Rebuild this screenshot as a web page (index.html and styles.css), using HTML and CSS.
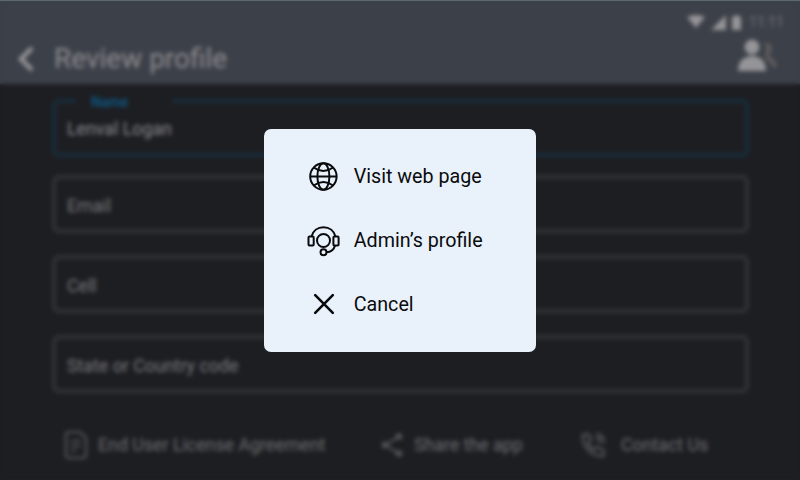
FILE: index.html
```html
<!DOCTYPE html>
<html lang="en">
<head>
<meta charset="utf-8">
<title>Review profile</title>
<link rel="stylesheet" href="styles.css">
</head>
<body>
<div class="screen">
  <header class="appbar">
    <div class="status">
      <svg width="18" height="14" viewBox="0 0 18 14"><path d="M0 2Q9-2 18 2L9 13Z" fill="currentColor"/></svg>
      <svg width="15" height="15" viewBox="0 0 15 15"><path d="M15 0V15H0Z" fill="currentColor"/></svg>
      <svg width="9" height="15" viewBox="0 0 9 15"><path d="M3 0h3v1.500h3V15H0V1.500h3Z" fill="currentColor"/></svg>
      <span class="clock">11:11</span>
    </div>
    <div class="titlebar">
      <svg class="back" width="18" height="26" viewBox="0 0 18 26"><path d="M15 2L4 13L15 24" fill="none" stroke="currentColor" stroke-width="4.500"/></svg>
      <h1>Review profile</h1>
      <svg class="people" width="40" height="34" viewBox="0 0 40 34"><circle cx="14" cy="8" r="7.500" fill="currentColor"/><path d="M0 32C0 22 6 17 14 17S28 22 28 32Z" fill="currentColor"/><path d="M27 6q6 0 4 6q-1 3-4 3M28 19q7 1 9 9" fill="none" stroke="#605c5e" stroke-width="4.500"/></svg>
    </div>
  </header>
  <main>
    <fieldset class="field active"><legend>Name</legend><span>Lenval Logan</span></fieldset>
    <div class="field">Email</div>
    <div class="field">Cell</div>
    <div class="field">State or Country code</div>
  </main>
  <footer>
    <div class="link eula">
      <svg width="24" height="30" viewBox="0 0 24 30" fill="none" stroke="currentColor" stroke-width="2.200"><path d="M5 2h11l6 6v17q0 3-3 3H5q-3 0-3-3V5q0-3 3-3Z"/><path d="M7 11h10M7 16h10M7 21h5"/></svg>
      <span>End User License Agreement</span>
    </div>
    <div class="link share">
      <svg width="24" height="26" viewBox="0 0 24 26" fill="currentColor"><path d="M18 4.500L4 13L18 21.500" fill="none" stroke="currentColor" stroke-width="2.200"/><circle cx="18" cy="4.500" r="3.300"/><circle cx="4" cy="13" r="3.300"/><circle cx="18" cy="21.500" r="3.300"/></svg>
      <span>Share the app</span>
    </div>
    <div class="link contact">
      <svg width="26" height="26" viewBox="0 0 26 26" fill="none" stroke="currentColor" stroke-width="2.400"><path d="M3 3l4-1q2 0 3 3l1 3-3 3q2 5 6 7l3-3 5 2q2 1 2 3l-1 4Q14 24 8 18Q2 11 3 3ZM16 2q8 1 8 9M16 6q4 1 4 5"/></svg>
      <span>Contact Us</span>
    </div>
  </footer>
</div>
<div class="overlay">
  <div class="dialog" role="dialog">
    <button>
      <svg width="34" height="34" viewBox="0 0 34 34" fill="none" stroke="currentColor" stroke-width="2"><circle cx="16.400" cy="17.500" r="13.200"/><ellipse cx="16.400" cy="17.500" rx="6" ry="13.200"/><path d="M3.200 17.500H29.600M6.700 8.500Q16.400 15.500 26.100 8.500M6.700 26.500Q16.400 19.500 26.100 26.500"/></svg>
      <span>Visit web page</span>
    </button>
    <button>
      <svg width="34" height="34" viewBox="0 0 34 34" fill="none" stroke="currentColor" stroke-width="2"><circle cx="16.500" cy="17.500" r="6.500"/><path d="M4.500 13.500C6 8 10.500 4.300 16.500 4.300S27 8 28.500 13.500M28 22.500C27 26.500 24 29 19.500 29.300"/><rect x="1.500" y="13.600" width="5.200" height="8.800" rx="1"/><rect x="26.400" y="13.600" width="5.200" height="8.800" rx="1"/><circle cx="16.500" cy="29.300" r="3"/></svg>
      <span>Admin’s profile</span>
    </button>
    <button>
      <svg width="34" height="34" viewBox="0 0 34 34" fill="none" stroke="currentColor" stroke-width="2.600" stroke-linecap="round"><path d="M8.200 8.200L25.800 25.800M25.800 8.200L8.200 25.800"/></svg>
      <span>Cancel</span>
    </button>
  </div>
</div>
</body>
</html>
```
FILE: styles.css
```css
* { box-sizing: border-box; }
body {
  margin: 0;
  width: 800px;
  height: 480px;
  overflow: hidden;
  font-family: Roboto, "Liberation Sans", sans-serif;
}
svg { flex: none; display: block; }
.screen {
  height: 480px;
  display: flex;
  flex-direction: column;
  background: #1d1e22;
}
.appbar {
  height: 84px;
  background: #3c4048;
  color: #959498;
}
.status {
  height: 36px;
  padding: 15px 16px 0 0;
  display: flex;
  justify-content: flex-end;
  align-items: flex-start;
  gap: 6px;
}
.clock {
  width: 35px;
  margin-left: 2px;
  color: #74777c;
  font-size: 14px;
  line-height: 14px;
}
.titlebar {
  height: 46px;
  display: flex;
  align-items: center;
  padding: 0 22px 0 17px;
}
.titlebar h1 {
  margin: 0 0 0 19px;
  font-size: 28px;
  font-weight: 400;
  line-height: 30px;
  color: #8c8c91;
}
.people {
  margin: -7px 0 0 auto;
}
main {
  height: 309px;
  padding: 14px 51px 0 52px;
  display: flex;
  flex-direction: column;
  gap: 22px;
}
.field {
  height: 58px;
  flex: none;
  margin: 0;
  border: 4px solid #323337;
  border-radius: 7px;
  padding: 2px 11px 0;
  display: flex;
  align-items: center;
  font-size: 17.800px;
  color: #78797d;
}
.field.active {
  display: block;
  height: 65px;
  margin-top: -6px;
  margin-bottom: -4px;
  padding-top: 0;
  border-color: #182d3b;
  color: #88898c;
}
.field.active legend {
  width: 96px;
  height: 17px;
  margin-left: 9px;
  padding: 0 0 0 15px;
  font-size: 14px;
  line-height: 20px;
  font-weight: 500;
  color: #0c5a87;
}
.field.active span {
  display: block;
  line-height: 22px;
  margin-top: 9px;
}
footer {
  height: 87px;
  padding: 31px 0 0 64px;
  display: flex;
  font-size: 17.800px;
  color: #6c6d71;
}
.link {
  height: 42px;
  display: flex;
  align-items: center;
}
.link span { margin-top: -2px; }
.link svg { color: #535458; }
.eula { width: 317px; gap: 10px; }
.share { width: 199px; gap: 9px; }
.contact { gap: 15px; }
.overlay {
  position: absolute;
  inset: 0;
  display: flex;
  justify-content: center;
  align-items: flex-start;
  padding-top: 128px;
  border-top: 1px solid #5d6872;
  backdrop-filter: blur(2.300px);
}
.dialog {
  width: 272px;
  height: 223px;
  border-radius: 7px;
  background: #e9f1fb;
  padding: 15px 43px;
}
.dialog button {
  width: 100%;
  height: 64px;
  padding: 0;
  border: 0;
  background: none;
  display: flex;
  align-items: center;
  gap: 12.700px;
  font: 400 19.700px/24px Roboto, "Liberation Sans", sans-serif;
  color: #0a0b0c;
  white-space: nowrap;
}
.dialog span { margin-top: 1px; }
```
